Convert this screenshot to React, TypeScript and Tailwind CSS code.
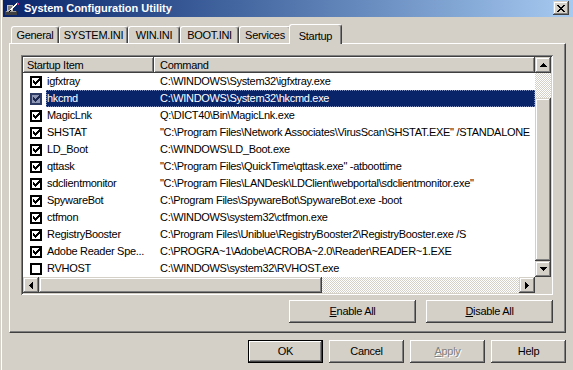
import React from 'react';

type Row = { name: string; command: string; checked: boolean };

const rows: Row[] = [
  { name: 'igfxtray', command: 'C:\\WINDOWS\\System32\\igfxtray.exe', checked: true },
  { name: 'hkcmd', command: 'C:\\WINDOWS\\System32\\hkcmd.exe', checked: true },
  { name: 'MagicLnk', command: 'Q:\\DICT40\\Bin\\MagicLnk.exe', checked: true },
  { name: 'SHSTAT', command: '"C:\\Program Files\\Network Associates\\VirusScan\\SHSTAT.EXE" /STANDALONE', checked: true },
  { name: 'LD_Boot', command: 'C:\\WINDOWS\\LD_Boot.exe', checked: true },
  { name: 'qttask', command: '"C:\\Program Files\\QuickTime\\qttask.exe" -atboottime', checked: true },
  { name: 'sdclientmonitor', command: '"C:\\Program Files\\LANDesk\\LDClient\\webportal\\sdclientmonitor.exe"', checked: true },
  { name: 'SpywareBot', command: 'C:\\Program Files\\SpywareBot\\SpywareBot.exe -boot', checked: true },
  { name: 'ctfmon', command: 'C:\\WINDOWS\\system32\\ctfmon.exe', checked: true },
  { name: 'RegistryBooster', command: 'C:\\Program Files\\Uniblue\\RegistryBooster2\\RegistryBooster.exe /S', checked: true },
  { name: 'Adobe Reader Spe...', command: 'C:\\PROGRA~1\\Adobe\\ACROBA~2.0\\Reader\\READER~1.EXE', checked: true },
  { name: 'RVHOST', command: 'C:\\WINDOWS\\system32\\RVHOST.exe', checked: false },
];

// classic 3D edges
const raised = 'bg-[#d4d0c8] shadow-[inset_-1px_-1px_#404040,inset_1px_1px_#ffffff,inset_-2px_-2px_#808080]';
const scrollPart = 'bg-[#d4d0c8] shadow-[inset_-1px_-1px_#404040,inset_1px_1px_#d4d0c8,inset_-2px_-2px_#808080,inset_2px_2px_#ffffff]';
const dither = 'bg-[repeating-conic-gradient(#d4d0c8_0%_25%,#ffffff_0%_50%)] bg-[length:2px_2px]';

const glyphs = {
  close: ['##....##', '.##..##.', '..####..', '...##...', '..####..', '.##..##.', '##....##'],
  check: ['......#', '.....##', '#...###', '##.###.', '#####..', '.###...', '..#....'],
  up: ['...#...', '..###..', '.#####.', '#######'],
  down: ['#######', '.#####.', '..###..', '...#...'],
  left: ['...#', '..##', '.###', '####', '.###', '..##', '...#'],
  right: ['#...', '##..', '###.', '####', '###.', '##..', '#...'],
};

function Glyph({ rows, color = '#000000' }: { rows: string[]; color?: string }) {
  const d = rows
    .map((r, y) => r.split('').map((c, x) => (c === '#' ? `M${x} ${y}h1v1h-1z` : '')).join(''))
    .join('');
  return (
    <svg width={rows[0].length} height={rows.length} viewBox={`0 0 ${rows[0].length} ${rows.length}`} shapeRendering="crispEdges">
      <path d={d} fill={color} />
    </svg>
  );
}

function Tab({ label, w, active }: { label: string; w: string; active?: boolean }) {
  if (active) {
    return (
      <div className={`${w} -ml-[2px] h-[20px] -mb-px relative z-10 bg-[#d4d0c8] border-l border-t border-white border-r border-r-[#404040] shadow-[inset_-1px_0_#808080] rounded-t-[3px] flex justify-center pt-[3px]`}>
        {label}
      </div>
    );
  }
  return (
    <div className={`${w} h-[17px] bg-[#d4d0c8] border-l border-t border-white border-r border-r-[#404040] shadow-[inset_-1px_0_#808080] rounded-t-[3px] flex items-center justify-center pt-px`}>
      {label}
    </div>
  );
}

function Checkbox({ checked, selected }: { checked: boolean; selected?: boolean }) {
  return (
    <div className={`w-[12px] h-[12px] border-2 flex items-center justify-center ${selected ? 'border-[#2c3a64] bg-[#8c96b4]' : 'border-black bg-white'}`}>
      {checked && <Glyph rows={glyphs.check} color={selected ? '#1c2850' : '#000000'} />}
    </div>
  );
}

function Button({ children, w, isDefault }: { children: React.ReactNode; w: string; isDefault?: boolean }) {
  return (
    <div
      className={`${w} h-[23px] flex items-center justify-center ${
        isDefault
          ? 'bg-[#d4d0c8] shadow-[inset_0_0_0_1px_#000000,inset_-2px_-2px_#404040,inset_2px_2px_#ffffff,inset_-3px_-3px_#808080]'
          : raised
      }`}
    >
      {children}
    </div>
  );
}

export default function App() {
  return (
    <div className="w-[573px] h-[370px] overflow-hidden bg-[#d4d0c8] text-black text-[11px] tracking-[-0.3px] font-['Liberation_Sans',Arial,sans-serif] shadow-[inset_1px_0_#d4d0c8,inset_2px_0_#ffffff] flex flex-col">
      {/* title bar */}
      <div className="ml-[3px] h-[17px] flex items-start bg-gradient-to-r from-[#0a246a] to-[#a6caf0]">
        <div className="ml-[1px] mt-[1px] w-[16px] h-[16px]">
          <svg width="16" height="16" viewBox="0 0 16 16" shapeRendering="crispEdges">
            <rect x="1" y="10" width="12" height="4" fill="#404040" />
            <rect x="2" y="10" width="10" height="1" fill="#a0a0a0" />
            <rect x="3" y="4" width="6" height="6" fill="#c0c0c0" />
            <rect x="4" y="5" width="4" height="4" fill="#808080" />
            <path d="M13 1 L14 2 L7 10 L6 9 Z" fill="#ffffff" />
            <path d="M13 1 L15 3 L14 4 L12 2 Z" fill="#c03090" />
            <path d="M6 9 L7 10 L5 11 Z" fill="#000000" />
          </svg>
        </div>
        <div className="ml-[4px] h-[17px] flex items-center font-bold text-white tracking-normal">System Configuration Utility</div>
        <div className={`ml-auto mr-[4px] mt-px w-[16px] h-[14px] flex items-center justify-center ${scrollPart}`}>
          <Glyph rows={glyphs.close} />
        </div>
      </div>

      <div className="pl-[9px] flex flex-col">
        {/* tabs */}
        <div className="mt-[7px] h-[19px] pl-[2px] flex items-end">
          <Tab label="General" w="w-[48px]" />
          <Tab label="SYSTEM.INI" w="w-[69px]" />
          <Tab label="WIN.INI" w="w-[52px]" />
          <Tab label="BOOT.INI" w="w-[59px]" />
          <Tab label="Services" w="w-[52px]" />
          <Tab label="Startup" w="w-[53px]" active />
        </div>

        {/* panel */}
        <div className="w-[557px] h-[290px] border-l border-t border-white border-r border-b border-r-[#404040] border-b-[#404040] shadow-[inset_-1px_-1px_#808080] pl-[11px] pt-[11px] flex flex-col">
          <div className="w-[532px] h-[240px] bg-white p-[2px] shadow-[inset_1px_1px_#808080,inset_-1px_-1px_#ffffff,inset_2px_2px_#404040,inset_-2px_-2px_#d4d0c8] flex flex-col">
            <div className="h-[220px] flex">
              <div className="w-[512px] overflow-hidden flex flex-col">
                <div className="h-[16px] flex shrink-0">
                  <div className={`w-[131px] pl-[4px] flex items-center ${raised}`}>Startup Item</div>
                  <div className={`flex-1 pl-[6px] flex items-center ${raised}`}>Command</div>
                </div>
                {rows.map((r, i) => {
                  const selected = i === 1;
                  return (
                    <div key={r.name} className="h-[17px] flex shrink-0 whitespace-nowrap">
                      <div className="w-[23px] pl-[7px] flex items-center">
                        <Checkbox checked={r.checked} selected={selected} />
                      </div>
                      <div className={`flex-1 flex items-stretch overflow-hidden ${selected ? 'bg-[#0a246a] text-white outline-1 outline-dotted outline-[#8090c0] -outline-offset-1' : ''}`}>
                        <div className="w-[108px] pl-[1px] flex items-center overflow-hidden">{r.name}</div>
                        <div className="flex-1 pl-[6px] flex items-center overflow-hidden">{r.command}</div>
                      </div>
                    </div>
                  );
                })}
              </div>
              <div className="w-[16px] flex flex-col">
                <div className={`h-[16px] flex items-center justify-center ${scrollPart}`}>
                  <Glyph rows={glyphs.up} />
                </div>
                <div className={`h-[25px] ${dither}`} />
                <div className={`flex-1 ${scrollPart}`} />
                <div className={`h-[16px] flex items-center justify-center ${scrollPart}`}>
                  <Glyph rows={glyphs.down} />
                </div>
              </div>
            </div>
            <div className="h-[16px] flex">
              <div className={`w-[16px] flex items-center justify-center ${scrollPart}`}>
                <Glyph rows={glyphs.left} />
              </div>
              <div className={`w-[283px] ${scrollPart}`} />
              <div className={`flex-1 ${dither}`} />
              <div className={`w-[16px] flex items-center justify-center ${scrollPart}`}>
                <Glyph rows={glyphs.right} />
              </div>
              <div className="w-[16px] bg-[#d4d0c8]" />
            </div>
          </div>

          <div className="w-[532px] mt-[5px] flex justify-end gap-[10px]">
            <Button w="w-[127px]">
              <span><span className="underline">E</span>nable All</span>
            </Button>
            <Button w="w-[127px]">
              <span><span className="underline">D</span>isable All</span>
            </Button>
          </div>
        </div>

        {/* dialog buttons */}
        <div className="w-[557px] mt-[7px] flex justify-end gap-[6px]">
          <Button w="w-[75px]" isDefault>OK</Button>
          <Button w="w-[75px]">Cancel</Button>
          <Button w="w-[75px]">
            <span className="text-[#808080] [text-shadow:1px_1px_0_#ffffff]"><span className="underline">A</span>pply</span>
          </Button>
          <Button w="w-[75px]">Help</Button>
        </div>
      </div>
    </div>
  );
}
